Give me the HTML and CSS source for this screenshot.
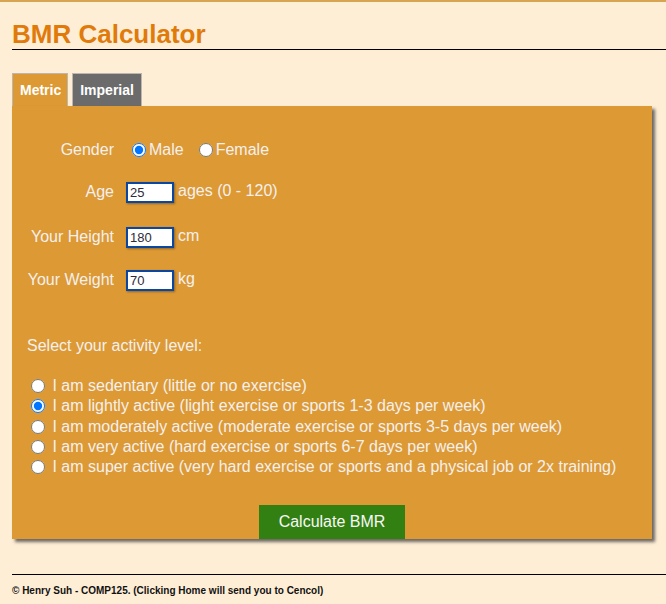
FILE: index.html
```html
<!DOCTYPE html>
<html>
<head>
<meta charset="utf-8">
<link rel="stylesheet" href="styles.css">
</head>
<body>
<div class="page">
  <h1 class="title">BMR Calculator</h1>
  <div class="tabs">
    <div class="tab tab-active">Metric</div>
    <div class="tab tab-inactive">Imperial</div>
  </div>
  <div class="panel">
    <div class="fields">
      <div class="lbl">Gender</div>
      <div class="val gender">
        <label class="opt"><input type="radio" name="g" checked>Male</label>
        <label class="opt"><input type="radio" name="g">Female</label>
      </div>
      <div class="lbl">Age</div>
      <div class="val"><input class="num" type="text" value="25"><span class="unit">ages (0 - 120)</span></div>
      <div class="lbl">Your Height</div>
      <div class="val"><input class="num" type="text" value="180"><span class="unit">cm</span></div>
      <div class="lbl">Your Weight</div>
      <div class="val"><input class="num" type="text" value="70"><span class="unit">kg</span></div>
    </div>
    <div class="activity">
      <div class="act-title">Select your activity level:</div>
      <ul class="act-list">
        <li><label><input type="radio" name="a"> I am sedentary (little or no exercise)</label></li>
        <li><label><input type="radio" name="a" checked> I am lightly active (light exercise or sports 1-3 days per week)</label></li>
        <li><label><input type="radio" name="a"> I am moderately active (moderate exercise or sports 3-5 days per week)</label></li>
        <li><label><input type="radio" name="a"> I am very active (hard exercise or sports 6-7 days per week)</label></li>
        <li><label><input type="radio" name="a"> I am super active (very hard exercise or sports and a physical job or 2x training)</label></li>
      </ul>
    </div>
    <div class="actions">
      <button class="calc" type="button">Calculate BMR</button>
    </div>
  </div>
  <footer class="footer">© Henry Suh - COMP125. (Clicking Home will send you to Cencol)</footer>
</div>
</body>
</html>
```

FILE: styles.css
```css
html, body {
  margin: 0;
  padding: 0;
}
body {
  background: #ffeed6;
  font-family: "Liberation Sans", Arial, sans-serif;
  border-top: 2px solid #d8a452;
  min-height: 602px;
}
.page {
  padding-left: 12px;
}
.title {
  margin: 0;
  padding-top: 18px;
  height: 29px;
  line-height: 29px;
  font-size: 26px;
  font-weight: bold;
  color: #e07b0b;
  border-bottom: 1px solid #000;
}
.tabs {
  display: flex;
  gap: 4px;
  margin-top: 23px;
  height: 33px;
}
.tab {
  box-sizing: border-box;
  height: 34px;
  padding: 8px 6px 0 7px;
  font-size: 14px;
  font-weight: bold;
  color: #fff;
  border: 1px solid #bdb6ad;
  border-bottom: none;
}
.tab-active {
  background: #dd9934;
}
.tab-inactive {
  background: #6b6b6b;
  padding-right: 7px;
  padding-left: 7px;
  border-bottom: 1px solid #bdb6ad;
}
.panel {
  position: relative;
  width: 640px;
  height: 433px;
  background: #dd9934;
  box-shadow: 3px 3px 3px rgba(60, 60, 60, 0.75);
  color: #f4f0ee;
  font-size: 16px;
  display: flex;
  flex-direction: column;
}
.fields {
  display: grid;
  grid-template-columns: 102px auto;
  grid-template-rows: 22px 42px 45px 43px;
  column-gap: 12px;
  align-items: end;
  padding-top: 33px;
}
.lbl {
  text-align: right;
  line-height: 22px;
  height: 22px;
}
.val {
  display: flex;
  align-items: center;
  height: 22px;
}
.gender .opt {
  display: flex;
  align-items: center;
  margin-right: 9px;
}
.gender input {
  margin: 0 3px 0 6px;
  width: 14px;
  height: 14px;
}
.num {
  box-sizing: border-box;
  width: 48px;
  height: 21px;
  border: 2px solid #0b47a0;
  padding: 0 2px;
  font-family: "Liberation Sans", Arial, sans-serif;
  font-size: 13px;
  color: #2b2b3a;
  background: #fff;
  box-shadow: 1px 1px 2px rgba(0,0,0,0.35);
  margin: 0 4px 0 0;
  outline: none;
}
.unit {
  position: relative;
  top: -1px;
}
.activity {
  padding-left: 14px;
  margin-top: 45px;
}
.act-title {
  line-height: 20px;
  padding-left: 1px;
}
.act-list {
  list-style: none;
  margin: 20px 0 0 0;
  padding: 0;
}
.act-list li {
  line-height: 20px;
  height: 20.25px;
}
.act-list input {
  margin: 0 3px 0 5px;
  width: 14px;
  height: 14px;
  vertical-align: -2px;
}
.actions {
  margin-top: auto;
  display: flex;
  justify-content: center;
}
.calc {
  width: 146px;
  height: 34px;
  border: none;
  background: #338012;
  color: #f8f8f8;
  font-family: "Liberation Sans", Arial, sans-serif;
  font-size: 16px;
  padding: 0;
}
.footer {
  margin-top: 35px;
  border-top: 1px solid #000;
  padding-top: 10px;
  font-size: 10px;
  font-weight: bold;
  color: #111;
}
```
